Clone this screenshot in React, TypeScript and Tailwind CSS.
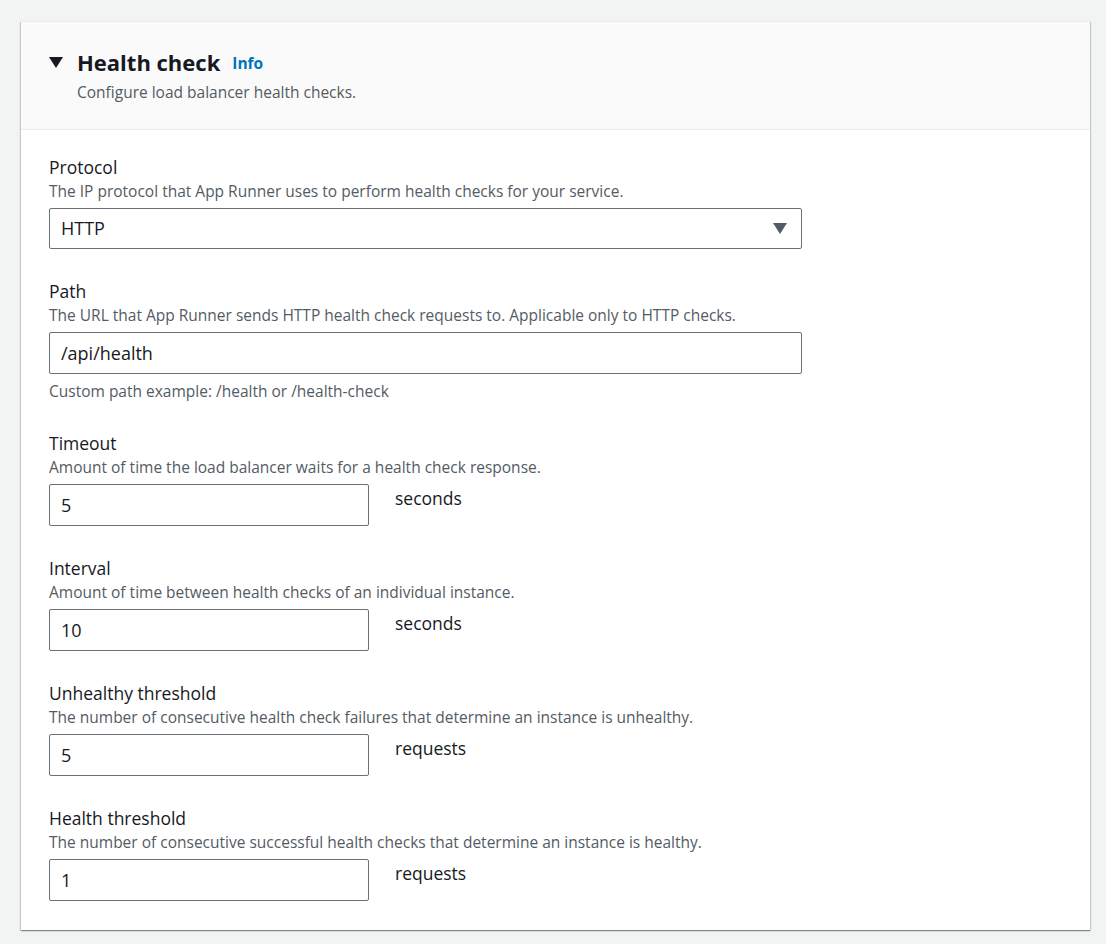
const fields = [
  {
    label: "Timeout",
    desc: "Amount of time the load balancer waits for a health check response.",
    value: "5",
    unit: "seconds",
  },
  {
    label: "Interval",
    desc: "Amount of time between health checks of an individual instance.",
    value: "10",
    unit: "seconds",
  },
  {
    label: "Unhealthy threshold",
    desc: "The number of consecutive health check failures that determine an instance is unhealthy.",
    value: "5",
    unit: "requests",
  },
  {
    label: "Health threshold",
    desc: "The number of consecutive successful health checks that determine an instance is healthy.",
    value: "1",
    unit: "requests",
  },
];

const Label = ({ title, desc }: { title: string; desc: string }) => (
  <div className="mb-[7px]">
    <div className="text-[17.5px] leading-[22px] text-[#16191f]">{title}</div>
    <div className="mt-[3px] text-[15.5px] leading-[20px] text-[#545b64]">{desc}</div>
  </div>
);

const App = () => {
  return (
    <div
      className="min-h-[944px] bg-[#f2f3f3] pt-[21px] pl-[21px] pr-[16px]"
      style={{ fontFamily: "'Open Sans', 'Noto Sans', Arial, sans-serif" }}
    >
      <div className="bg-white border-t border-[#eaeded] shadow-[0_1px_1px_0_rgba(0,28,36,0.3),1px_1px_1px_0_rgba(0,28,36,0.15),-1px_1px_1px_0_rgba(0,28,36,0.15)]">
        <div className="bg-[#fafafa] border-b border-[#eaeded] pl-[28px] pt-[26px] pb-[27px]">
          <div className="flex items-center">
            <svg width="14" height="11" viewBox="0 0 14 11" className="mr-[14px]">
              <path d="M0 0 H14 L7 11 Z" fill="#16191f" />
            </svg>
            <span className="text-[22px] leading-[28px] font-bold text-[#16191f]">Health check</span>
            <span className="ml-[12px] text-[15.5px] font-bold text-[#0073bb] mt-[3px]">Info</span>
          </div>
          <div className="pl-[28px] text-[15.5px] leading-[20px] text-[#545b64] mt-[6px]">
            Configure load balancer health checks.
          </div>
        </div>

        <div className="pl-[28px] pt-[26px] pb-[29px] flex flex-col gap-[31px]">
          <div>
            <Label
              title="Protocol"
              desc="The IP protocol that App Runner uses to perform health checks for your service."
            />
            <div className="w-[753px] h-[41px] border border-[#687078] rounded-[2px] flex items-center justify-between pl-[11px] pr-[14px]">
              <span className="text-[18px] text-[#16191f]">HTTP</span>
              <svg width="14" height="11" viewBox="0 0 14 11">
                <path d="M0 0 H14 L7 11 Z" fill="#545b64" />
              </svg>
            </div>
          </div>

          <div>
            <Label
              title="Path"
              desc="The URL that App Runner sends HTTP health check requests to. Applicable only to HTTP checks."
            />
            <div className="w-[753px] h-[42px] border border-[#687078] rounded-[2px] flex items-center pl-[11px]">
              <span className="text-[18px] text-[#16191f]">/api/health</span>
            </div>
            <div className="mt-[7px] text-[15.5px] leading-[20px] text-[#545b64]">
              Custom path example: /health or /health-check
            </div>
          </div>

          {fields.map((f) => (
            <div key={f.label}>
              <Label title={f.label} desc={f.desc} />
              <div className="flex items-start">
                <div className="w-[320px] h-[42px] border border-[#687078] rounded-[2px] flex items-center pl-[11px]">
                  <span className="text-[18px] text-[#16191f]">{f.value}</span>
                </div>
                <span className="ml-[26px] mt-[3px] text-[17.5px] leading-[22px] text-[#16191f]">{f.unit}</span>
              </div>
            </div>
          ))}
        </div>
      </div>
    </div>
  );
};

export default App;
